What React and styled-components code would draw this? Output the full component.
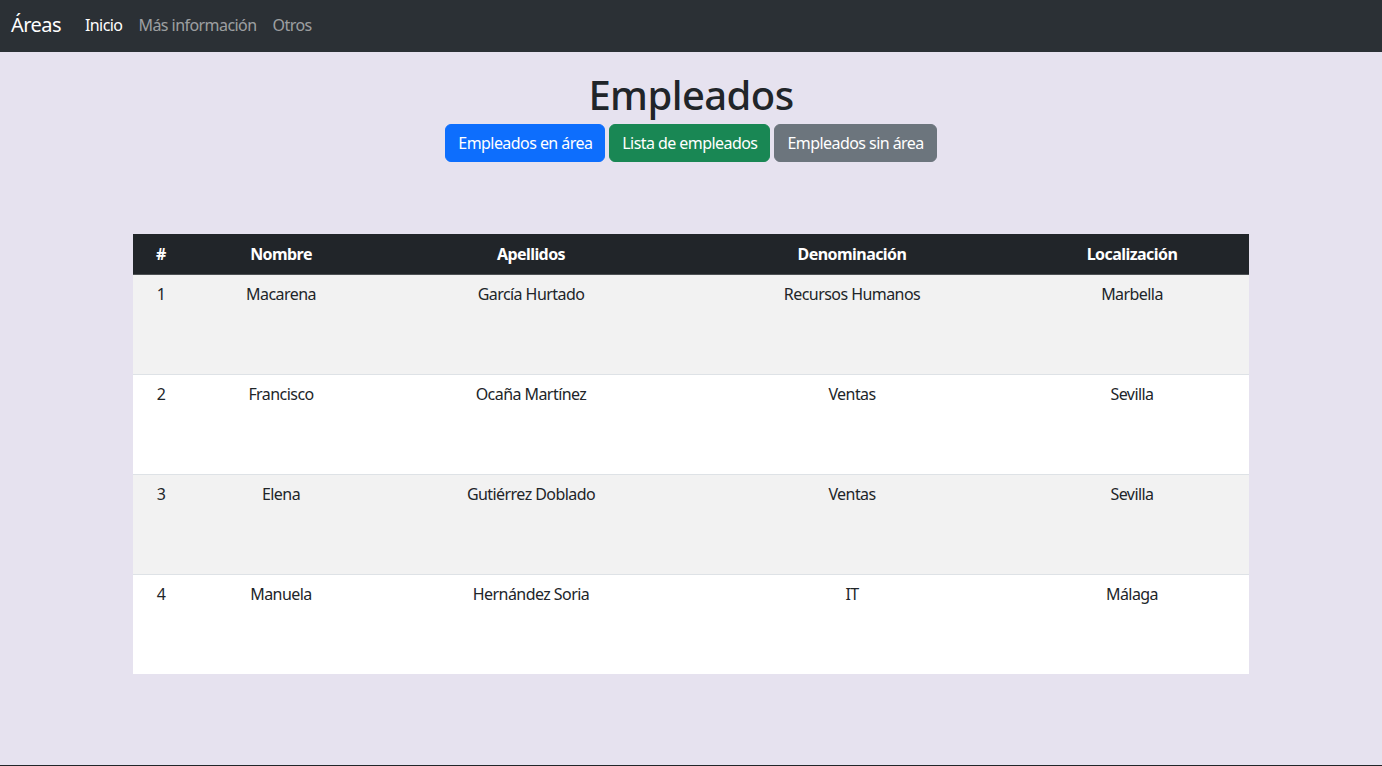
import styled, { createGlobalStyle } from 'styled-components'

const GlobalStyle = createGlobalStyle`
  html, body {
    margin: 0;
    padding: 0;
  }
  body {
    font-family: "Noto Sans", "Open Sans", sans-serif;
    font-size: 16px;
    letter-spacing: -0.035em;
    color: #212529;
    background: #e6e2ef;
  }
`

const Page = styled.div`
  min-height: 765px;
  border-bottom: 1px solid #212529;
  display: flex;
  flex-direction: column;
`

const Navbar = styled.nav`
  height: 52px;
  box-sizing: border-box;
  padding: 0 11px 3px;
  background: #2b3035;
  display: flex;
  align-items: center;
`

const Brand = styled.a`
  color: #fff;
  font-size: 20px;
  margin-right: 16px;
  text-decoration: none;
`

const NavLink = styled.a`
  color: ${(p) => (p.$active ? '#fff' : 'rgba(255, 255, 255, 0.55)')};
  text-decoration: none;
  padding: 0 8px;
`

const Main = styled.main`
  display: flex;
  flex-direction: column;
  align-items: center;
  padding-top: 19px;
`

const Title = styled.h1`
  margin: 0 0 5px;
  font-size: 40px;
  font-weight: 500;
  line-height: 1.2;
`

const ButtonRow = styled.div`
  display: flex;
  gap: 4px;
`

const Button = styled.button`
  font-family: inherit;
  font-size: 16px;
  letter-spacing: inherit;
  line-height: 24px;
  padding: 6px 12px;
  border: 1px solid ${(p) => p.$bg};
  border-radius: 6px;
  background: ${(p) => p.$bg};
  color: #fff;
`

const Table = styled.table`
  margin-top: 72px;
  width: 1116px;
  border-collapse: collapse;
  text-align: center;
`

const Th = styled.th`
  background: #212529;
  color: #fff;
  font-weight: 700;
  padding: 8px;
  height: 40px;
  box-sizing: border-box;
  width: ${(p) => p.$w}px;
  border-bottom: 1px solid #4d5154;
`

const Row = styled.tr`
  background: ${(p) => (p.$striped ? '#f2f2f2' : '#fff')};
  border-bottom: ${(p) => (p.$last ? 'none' : '1px solid #dee2e6')};
`

const Td = styled.td`
  vertical-align: top;
  padding: 8px;
  height: 100px;
  box-sizing: border-box;
`

const columns = [
  { label: '#', w: 56 },
  { label: 'Nombre', w: 184 },
  { label: 'Apellidos', w: 316 },
  { label: 'Denominación', w: 326 },
  { label: 'Localización', w: 234 },
]

const empleados = [
  ['1', 'Macarena', 'García Hurtado', 'Recursos Humanos', 'Marbella'],
  ['2', 'Francisco', 'Ocaña Martínez', 'Ventas', 'Sevilla'],
  ['3', 'Elena', 'Gutiérrez Doblado', 'Ventas', 'Sevilla'],
  ['4', 'Manuela', 'Hernández Soria', 'IT', 'Málaga'],
]

export default function App() {
  return (
    <Page>
      <GlobalStyle />
      <Navbar>
        <Brand href="#">Áreas</Brand>
        <NavLink $active href="#">Inicio</NavLink>
        <NavLink href="#">Más información</NavLink>
        <NavLink href="#">Otros</NavLink>
      </Navbar>
      <Main>
        <Title>Empleados</Title>
        <ButtonRow>
          <Button $bg="#0d6efd">Empleados en área</Button>
          <Button $bg="#198754">Lista de empleados</Button>
          <Button $bg="#6c757d">Empleados sin área</Button>
        </ButtonRow>
        <Table>
          <thead>
            <tr>
              {columns.map((c) => (
                <Th key={c.label} $w={c.w}>{c.label}</Th>
              ))}
            </tr>
          </thead>
          <tbody>
            {empleados.map((e, i) => (
              <Row key={e[0]} $striped={i % 2 === 0} $last={i === empleados.length - 1}>
                {e.map((v, j) => (
                  <Td key={j}>{v}</Td>
                ))}
              </Row>
            ))}
          </tbody>
        </Table>
      </Main>
    </Page>
  )
}
